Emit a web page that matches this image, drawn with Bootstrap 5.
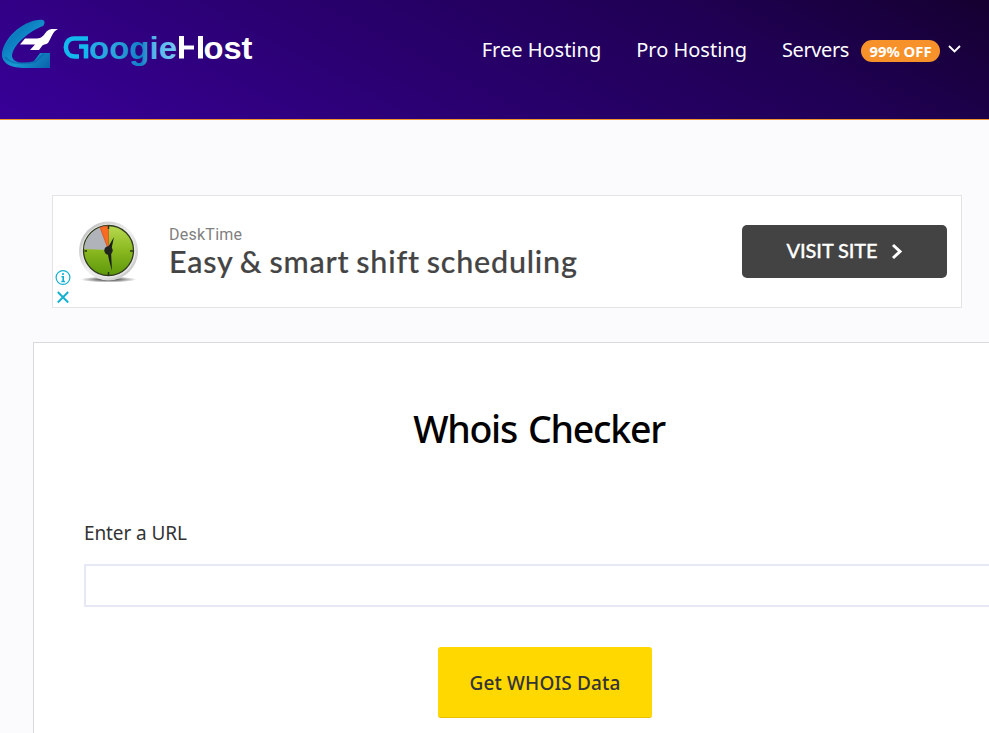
<!DOCTYPE html>
<html lang="en">
<head>
<meta charset="utf-8">
<meta name="viewport" content="width=device-width, initial-scale=1">
<title>Whois Checker</title>
<link href="https://cdn.jsdelivr.net/npm/bootstrap@5.3.0/dist/css/bootstrap.min.css" rel="stylesheet">
<style>
body{font-family:"Noto Sans","Open Sans",sans-serif;background:#fbfbfe;overflow:hidden;height:733px}
.site-header{height:120px;padding:0 28px 20px 0;border-bottom:1px solid #f0922e;background:linear-gradient(28deg,#380098 0%,#29006e 42%,#1f0053 74%,#150030 100%)}
.site-header .nav-link{color:#fff;font-size:20px;line-height:28px;white-space:nowrap;padding:0}
.menu{gap:35px}
.servers{letter-spacing:-.4px}
.off-badge{background:#f7922b;font-size:14.8px;font-weight:700;line-height:22px;height:22px;width:79px;padding:0;margin:2px 8px 0 12px;letter-spacing:0}
.ad-box{width:910px;height:113px;margin:75px 0 0 52px;border:1px solid #e4e4e7}
.ad-marks{width:19px;padding-top:72px}
.ad-clock{margin:22px 0 0 1px}
.ad-text{margin-left:28px;padding-top:28px;white-space:nowrap}
.ad-brand{font-family:Roboto,sans-serif;font-size:16px;line-height:22px;color:#808080;letter-spacing:.25px}
.ad-title{font-family:Lato,sans-serif;font-size:30.500px;line-height:31px;color:#444;font-weight:500;letter-spacing:.79px;word-spacing:-1.500px;-webkit-text-stroke:.2px #444}
.visit{width:205px;height:53px;margin:29px 14px 0 auto;padding-bottom:3px;background:#434343;color:#fff;border-radius:5px;font:500 20px Lato,sans-serif;-webkit-text-stroke:.3px #fff;letter-spacing:-.1px;gap:13px}
.visit svg{margin-top:3px}
.panel{height:420px;margin:34px 0 0 33px;border:1px solid #d9d9dc;border-right:0;border-radius:0;padding:60px 0 0 50px}
.panel h1{font-size:37.500px;line-height:52px;font-weight:500;color:#000;margin:0 0 64px;padding-left:5px;letter-spacing:-1.250px;word-spacing:2.500px}
.panel label{font-size:19px;line-height:28px;color:#333;margin-bottom:17px;letter-spacing:-.1px}
.panel .form-control{height:43px;border:2px solid #e6e9f5;border-right:0;border-radius:0}
.actions{padding:40px 0 0 17px}
.fetch{width:214px;height:71px;padding:2px 0 0;background:#ffd800;border:0;border-bottom:1px solid #e6c100;border-radius:3px;color:#333;font-size:19px;font-weight:500;letter-spacing:.15px}
</style>
</head>
<body>
<header class="site-header d-flex align-items-start justify-content-between">
  <a href="#" class="d-block" aria-label="GoogieHost">
    <svg class="d-block" width="260" height="80" viewBox="0 0 260 80">
      <defs>
        <linearGradient id="ring" x1="0" y1="0" x2="1" y2="1"><stop offset="0" stop-color="#27a9dc"/><stop offset=".3" stop-color="#0b7cbf"/><stop offset=".6" stop-color="#1899d2"/><stop offset="1" stop-color="#0a5fa8"/></linearGradient>
        <linearGradient id="word" x1="64" x2="177" y1="0" y2="0" gradientUnits="userSpaceOnUse"><stop offset="0" stop-color="#12b8ee"/><stop offset=".45" stop-color="#2ba4dc"/><stop offset=".68" stop-color="#117fc7"/><stop offset=".8" stop-color="#55b4ea"/><stop offset="1" stop-color="#74c8f4"/></linearGradient>
      </defs>
      <path d="M43 20C29 18 5 34 2 53C1 64 12 68 25 68H50V53H40L34 61C29 63 13 65 12 56C13 44 30 31 43 26C45 24 45 21 43 20Z" fill="url(#ring)"/>
      <path d="M5 57C11 65 24 64 35 62L44 54" fill="none" stroke="#075ba6" stroke-width="2" opacity=".5"/>
      <path d="M20 44.500L25 38.500H37C46 38 44 29 53 29H58C52 32 52 37 48 43C46 45 43 44 42 46L39 50H30L35 44.500Z" fill="#fff"/>
      <g font-family="Liberation Sans, sans-serif" font-weight="700" font-size="31">
        <path d="M88 38.500H74C63 38.500 63 56.500 75 56.500H79M79 46.500H86V58.500" fill="none" stroke="#12b8ee" stroke-width="4.600"/>
        <text x="89" y="58.500" textLength="88" lengthAdjust="spacingAndGlyphs" fill="url(#word)">oogie</text>
        <path d="M179 36h5v9.500h10v4h-10v9h-5zM198 36h5v22.500h-5z" fill="#fff"/>
        <text x="203.500" y="58.500" textLength="49" lengthAdjust="spacingAndGlyphs" fill="#fff">ost</text>
      </g>
    </svg>
  </a>
  <nav class="menu nav flex-nowrap align-self-center">
    <a class="nav-link" href="#">Free Hosting</a>
    <a class="nav-link" href="#">Pro Hosting</a>
    <a class="servers nav-link d-flex align-items-center" href="#">Servers<span class="off-badge badge rounded-pill">99% OFF</span>
      <svg width="13" height="10" viewBox="0 0 13 10"><path d="M1 1L6.500 6.500L12 1" fill="none" stroke="#fff" stroke-width="1.900"/></svg></a>
  </nav>
</header>
<main>
  <section class="ad-box d-flex bg-white">
    <div class="ad-marks d-flex flex-column align-items-center">
      <svg width="18" height="38" viewBox="0 0 18 38" fill="none" stroke="#12b0d0"><circle cx="9" cy="9.500" r="6.900" stroke-width="1.200"/><path d="M9 5V7M7.500 8.700H9.200V13.500M7.300 13.500H11" stroke-width="1.600"/><path d="M3.800 24L14.200 34.500M14.200 24L3.800 34.500" stroke-width="1.900"/></svg>
    </div>
    <svg class="ad-clock flex-shrink-0" width="68" height="72" viewBox="0 0 68 72">
      <defs>
        <linearGradient id="rim" x2="1" y2="1"><stop offset="0" stop-color="#b5b5b5"/><stop offset=".5" stop-color="#f0f0f0"/><stop offset="1" stop-color="#bcbcbc"/></linearGradient>
        <linearGradient id="dial" x2="0" y2="1"><stop offset="0" stop-color="#b9da50"/><stop offset=".5" stop-color="#8ab81f"/><stop offset="1" stop-color="#5d980b"/></linearGradient>
        <radialGradient id="shade"><stop offset="0" stop-color="#222"/><stop offset="1" stop-color="#222" stop-opacity="0"/></radialGradient>
      </defs>
      <ellipse cx="35.500" cy="61.500" rx="28" ry="3" fill="url(#shade)"/>
      <circle cx="35.500" cy="33" r="29.500" fill="url(#rim)"/>
      <circle cx="35.500" cy="33" r="27" fill="#e8e8e8"/>
      <circle cx="35.500" cy="32.500" r="25" fill="url(#dial)" stroke="#303a20" stroke-width="1.300"/>
      <path d="M35.500 32V8A24.500 24.500 0 0 0 11 31Z" fill="#b1b3ba"/>
      <path d="M35.500 32V8Q30 8 27 9.500Z" fill="#f76b22" stroke="#c9441a" stroke-width=".6"/>
      <path d="M11.500 33H14M57 33H60M35.500 54V57.500M35.500 8V11" stroke="#263310" stroke-width="1.500"/>
      <path d="M34 31L41 19L38 33L39 53L36 42Z" fill="#172017"/>
      <circle cx="35.500" cy="32.500" r="4.200" fill="#20241e"/>
    </svg>
    <div class="ad-text">
      <div class="ad-brand">DeskTime</div>
      <div class="ad-title">Easy &amp; smart shift scheduling</div>
    </div>
    <a href="#" class="visit d-flex align-items-center justify-content-center text-decoration-none">VISIT SITE
      <svg width="12" height="17" viewBox="0 0 12 17"><path d="M2 2L9 8.500L2 15" fill="none" stroke="#fff" stroke-width="3"/></svg></a>
  </section>
  <section class="panel card bg-white">
    <h1 class="text-center">Whois Checker</h1>
    <form>
      <label class="d-block" for="url">Enter a URL</label>
      <input id="url" class="form-control" type="text">
      <div class="actions d-flex justify-content-center"><button type="button" class="fetch btn">Get WHOIS Data</button></div>
    </form>
  </section>
</main>
<script src="https://cdn.jsdelivr.net/npm/bootstrap@5.3.0/dist/js/bootstrap.bundle.min.js"></script>
</body>
</html>
